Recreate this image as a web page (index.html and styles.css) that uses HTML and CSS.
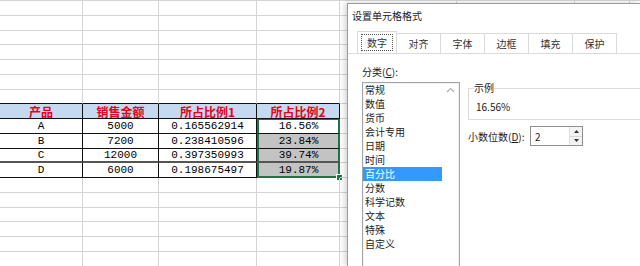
FILE: index.html
```html
<!DOCTYPE html>
<html>
<head>
    <title>设置单元格格式</title>
    <link rel="stylesheet" href="styles.css">
</head>
<body>
    <div class="sheet">
        <div class="row"><div class="c c1"></div><div class="c c2"></div><div class="c c3"></div><div class="c c4"></div><div class="c c5"></div><div class="c c6"></div><div class="c c7"></div><div class="c c8"></div></div>
        <div class="row"><div class="c c1"></div><div class="c c2"></div><div class="c c3"></div><div class="c c4"></div><div class="c c5"></div><div class="c c6"></div><div class="c c7"></div><div class="c c8"></div></div>
        <div class="row"><div class="c c1"></div><div class="c c2"></div><div class="c c3"></div><div class="c c4"></div><div class="c c5"></div><div class="c c6"></div><div class="c c7"></div><div class="c c8"></div></div>
        <div class="row"><div class="c c1"></div><div class="c c2"></div><div class="c c3"></div><div class="c c4"></div><div class="c c5"></div><div class="c c6"></div><div class="c c7"></div><div class="c c8"></div></div>
        <div class="row"><div class="c c1"></div><div class="c c2"></div><div class="c c3"></div><div class="c c4"></div><div class="c c5"></div><div class="c c6"></div><div class="c c7"></div><div class="c c8"></div></div>
        <div class="row"><div class="c c1"></div><div class="c c2"></div><div class="c c3"></div><div class="c c4"></div><div class="c c5"></div><div class="c c6"></div><div class="c c7"></div><div class="c c8"></div></div>
        <div class="row pre-head"><div class="c c1"></div><div class="c c2"></div><div class="c c3"></div><div class="c c4"></div><div class="c c5"></div><div class="c c6"></div><div class="c c7"></div><div class="c c8"></div></div>

        <div class="row head">
            <div class="c c1 t">产品</div>
            <div class="c c2 t">销售金额</div>
            <div class="c c3 t">所占比例1</div>
            <div class="c c4 t">所占比例2</div>
            <div class="c c5"></div><div class="c c6"></div><div class="c c7"></div><div class="c c8"></div>
        </div>
        <div class="row body">
            <div class="c c1 t">A</div>
            <div class="c c2 t">5000</div>
            <div class="c c3 t">0.165562914</div>
            <div class="c c4 t sel active">16.56%</div>
            <div class="c c5"></div><div class="c c6"></div><div class="c c7"></div><div class="c c8"></div>
        </div>
        <div class="row body">
            <div class="c c1 t">B</div>
            <div class="c c2 t">7200</div>
            <div class="c c3 t">0.238410596</div>
            <div class="c c4 t sel">23.84%</div>
            <div class="c c5"></div><div class="c c6"></div><div class="c c7"></div><div class="c c8"></div>
        </div>
        <div class="row body thick">
            <div class="c c1 t">C</div>
            <div class="c c2 t">12000</div>
            <div class="c c3 t">0.397350993</div>
            <div class="c c4 t sel">39.74%</div>
            <div class="c c5"></div><div class="c c6"></div><div class="c c7"></div><div class="c c8"></div>
        </div>
        <div class="row body">
            <div class="c c1 t">D</div>
            <div class="c c2 t">6000</div>
            <div class="c c3 t">0.198675497</div>
            <div class="c c4 t sel last">19.87%<span class="handle"></span></div>
            <div class="c c5"></div><div class="c c6"></div><div class="c c7"></div><div class="c c8"></div>
        </div>

        <div class="row"><div class="c c1"></div><div class="c c2"></div><div class="c c3"></div><div class="c c4"></div><div class="c c5"></div><div class="c c6"></div><div class="c c7"></div><div class="c c8"></div></div>
        <div class="row"><div class="c c1"></div><div class="c c2"></div><div class="c c3"></div><div class="c c4"></div><div class="c c5"></div><div class="c c6"></div><div class="c c7"></div><div class="c c8"></div></div>
        <div class="row"><div class="c c1"></div><div class="c c2"></div><div class="c c3"></div><div class="c c4"></div><div class="c c5"></div><div class="c c6"></div><div class="c c7"></div><div class="c c8"></div></div>
        <div class="row"><div class="c c1"></div><div class="c c2"></div><div class="c c3"></div><div class="c c4"></div><div class="c c5"></div><div class="c c6"></div><div class="c c7"></div><div class="c c8"></div></div>
        <div class="row"><div class="c c1"></div><div class="c c2"></div><div class="c c3"></div><div class="c c4"></div><div class="c c5"></div><div class="c c6"></div><div class="c c7"></div><div class="c c8"></div></div>
        <div class="row"><div class="c c1"></div><div class="c c2"></div><div class="c c3"></div><div class="c c4"></div><div class="c c5"></div><div class="c c6"></div><div class="c c7"></div><div class="c c8"></div></div>
    </div>

    <!-- format cells dialog, floating over the sheet -->
    <div class="dialog">
        <div class="dlg-title">设置单元格格式</div>
        <div class="tabs">
            <div class="tab current"><span>数字</span></div>
            <div class="tab">对齐</div>
            <div class="tab">字体</div>
            <div class="tab">边框</div>
            <div class="tab">填充</div>
            <div class="tab">保护</div>
        </div>
        <div class="panel">
            <div class="cat-label">分类(<u>C</u>):</div>
            <div class="panel-body">
                <div class="listbox">
                    <ul class="items">
                        <li>常规</li>
                        <li>数值</li>
                        <li>货币</li>
                        <li>会计专用</li>
                        <li>日期</li>
                        <li>时间</li>
                        <li class="chosen">百分比</li>
                        <li>分数</li>
                        <li>科学记数</li>
                        <li>文本</li>
                        <li>特殊</li>
                        <li>自定义</li>
                    </ul>
                    <div class="scroll">
                        <svg width="9" height="6" viewBox="0 0 9 6"><path d="M1 5 L4.5 1.5 L8 5" fill="none" stroke="#b0b0b0" stroke-width="1.2"/></svg>
                    </div>
                </div>
                <div class="options">
                    <fieldset class="sample">
                        <legend>示例</legend>
                        <div class="sample-val">16.56%</div>
                    </fieldset>
                    <div class="decimals">
                        <span>小数位数(<u>D</u>):</span>
                        <div class="spin">
                            <span class="spin-val">2</span>
                            <div class="spin-btns">
                                <div class="spin-btn"><svg width="5" height="3" viewBox="0 0 5 3"><path d="M0 3 L2.5 0 L5 3 Z" fill="#333"/></svg></div>
                                <div class="spin-btn"><svg width="5" height="3" viewBox="0 0 5 3"><path d="M0 0 L2.5 3 L5 0 Z" fill="#333"/></svg></div>
                            </div>
                        </div>
                    </div>
                </div>
            </div>
        </div>
    </div>
</body>
</html>
```

FILE: styles.css
```css
body {
    margin: 0;
    background-color: #fff;
    font-family: "Noto Sans CJK SC", sans-serif;
    overflow: hidden;
}

.sheet {
    border-top: 1px solid #d4d4d4;
    width: 640px;
    height: 265px;
    overflow: hidden;
}

.row {
    display: flex;
    height: 14.75px;
}

.c {
    box-sizing: border-box;
    flex-shrink: 0;
    height: 100%;
    border-right: 1px solid #d4d4d4;
    border-bottom: 1px solid #d4d4d4;
    display: flex;
    align-items: center;
    justify-content: center;
    font-family: "Liberation Mono", "Noto Sans CJK SC", monospace;
    font-size: 11px;
    color: #000;
    position: relative;
}

.c1 { width: 83px; }
.c2 { width: 76px; }
.c3 { width: 98px; }
.c4 { width: 83px; }
.c5 { width: 117px; }
.c6 { width: 118px; }
.c7 { width: 55px; }
.c8 { width: 10px; border-right: none; }

.pre-head .c1, .pre-head .c2, .pre-head .c3, .pre-head .c4 {
    border-bottom-color: #111;
}

.c.t {
    border-right-color: #111;
    border-bottom-color: #111;
}

.head .t {
    background-color: #c5d9f1;
    color: #e8001c;
    font-family: "Noto Sans CJK SC", sans-serif;
    font-weight: bold;
    font-size: 12px;
}

.thick .t {
    border-bottom: 2px solid #555;
}

.sel {
    background-color: #c3c3c3;
    border-left: 2px solid #217346;
    border-right: 2px solid #217346 !important;
}

.sel.active {
    background-color: #fff;
    border-top: 1px solid #217346;
}

.sel.last {
    border-bottom: 2px solid #217346 !important;
}

.handle {
    position: absolute;
    right: -5px;
    bottom: -5px;
    width: 5px;
    height: 5px;
    background-color: #217346;
    border: 1px solid #fff;
}

/* dialog */
.dialog {
    position: absolute;
    left: 347px;
    top: 3px;
    width: 293px;
    height: 263px;
    box-sizing: border-box;
    overflow: hidden;
    background-color: #fff;
    border: 1px solid #9a9a9a;
    border-right: none;
    border-bottom: none;
    box-shadow: -2px 0 6px rgba(0, 0, 0, 0.18);
    font-size: 10px;
    color: #1a1a1a;
}

.dlg-title {
    height: 24px;
    line-height: 24px;
    padding-left: 4px;
}

.tabs {
    display: flex;
    margin: 5px 0 0 9px;
    height: 20px;
}

.tab {
    box-sizing: border-box;
    width: 44px;
    height: 20px;
    border: 1px solid #dadada;
    border-bottom: none;
    border-left: none;
    display: flex;
    align-items: center;
    justify-content: center;
    color: #333;
}

.tab.current {
    width: 40px;
    border-left: 1px solid #dadada;
    height: 22px;
    margin-top: -2px;
    padding: 3px;
}

.tab.current span {
    flex: 1;
    height: 100%;
    display: flex;
    align-items: center;
    justify-content: center;
    border: 1px dotted #555;
}

.panel {
    border-top: 1px solid #dadada;
    padding: 11px 0 0 14px;
}

.cat-label {
    height: 14px;
    line-height: 14px;
}

.panel-body {
    display: flex;
    margin-top: 3px;
}

.listbox {
    box-sizing: border-box;
    width: 98px;
    height: 200px;
    border: 1px solid #a5a5a5;
    display: flex;
    box-shadow: inset 0 0 0 1px #f2f2f2;
}

.items {
    list-style: none;
    margin: 0;
    padding: 0;
    flex: 1;
}

.items li {
    height: 14px;
    line-height: 14px;
    padding-left: 2px;
    color: #222;
}

.items li.chosen {
    background-color: #3399ff;
    color: #fff;
}

.scroll {
    width: 17px;
    display: flex;
    justify-content: center;
    padding-top: 4px;
    box-sizing: border-box;
}

.options {
    margin-left: 8px;
    flex: 1;
}

.sample {
    margin: 0;
    padding: 0 0 0 6px;
    height: 38px;
    box-sizing: border-box;
    border: 1px solid #dcdcdc;
    border-right: none;
}

.sample legend {
    padding: 0;
    margin-left: -1px;
    line-height: 12px;
}

.sample-val {
    margin-top: 7px;
    line-height: 12px;
    padding-left: 1px;
}

.decimals {
    display: flex;
    align-items: center;
    margin-top: 6px;
}

.decimals > span {
    width: 62px;
}

.spin {
    box-sizing: border-box;
    width: 53px;
    height: 20px;
    border: 1px solid #8e8e8e;
    display: flex;
    align-items: center;
    justify-content: space-between;
    padding-left: 4px;
}

.spin-btns {
    display: flex;
    flex-direction: column;
    height: 100%;
    width: 12px;
    border-left: 1px solid #e0e0e0;
}

.spin-btn {
    flex: 1;
    display: flex;
    align-items: center;
    justify-content: center;
    background-color: #f3f3f3;
}

.spin-btn + .spin-btn {
    border-top: 1px solid #d8d8d8;
}
```
